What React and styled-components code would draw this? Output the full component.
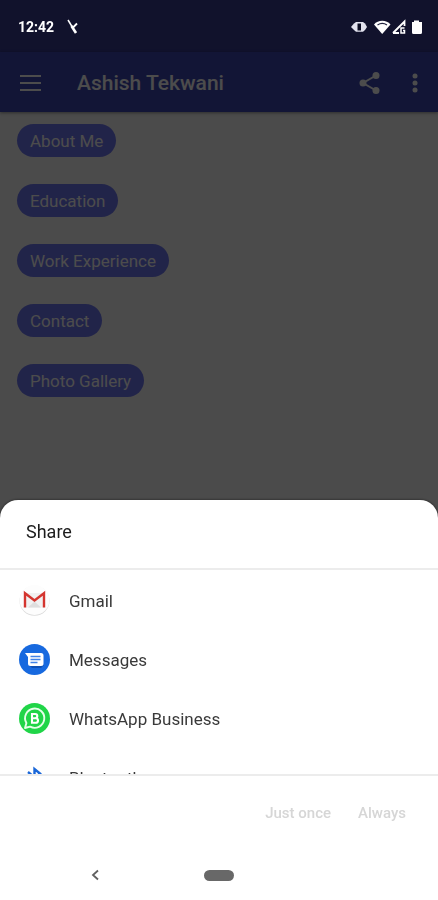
import styled, { createGlobalStyle } from "styled-components";

const GlobalStyle = createGlobalStyle`
    * {
        box-sizing: border-box;
    }

    body {
        margin: 0;
        font-family: Roboto, "Liberation Sans", sans-serif;
    }

    button {
        border: 0;
        padding: 0;
        background: none;
        font: inherit;
        color: inherit;
    }
`;

const Screen = styled.div`
    min-height: 100vh;
    background: #fafafa;
`;

const StatusBar = styled.div`
    height: 52px;
    background: #393c94;
`;

const StatusInfo = styled.div`
    display: flex;
    align-items: center;
    height: 52px;
    padding: 2px 15px 0 18px;
    color: #fff;
    font-size: 14px;
    font-weight: 700;
`;

const Notification = styled.svg`
    margin-left: 12px;
`;

const StatusIcons = styled.svg`
    margin-left: auto;
`;

const AppBar = styled.header`
    display: flex;
    align-items: center;
    height: 60px;
    padding: 2px 14px 0 20px;
    background: #3f49b4;
    color: #fff;
    box-shadow: 0 1px 3px rgba(0, 0, 0, 0.4);
`;

const Title = styled.h1`
    flex: 1;
    margin: 0 0 0 36px;
    font-size: 21px;
    font-weight: 500;
`;

const IconButton = styled.button`
    display: flex;
    margin-left: ${({ $gap }) => $gap || 0}px;
`;

const Chips = styled.nav`
    display: flex;
    flex-direction: column;
    align-items: flex-start;
    gap: 27px;
    padding: 12px 17px;
`;

const Chip = styled.button`
    height: 33px;
    padding: 0 13px;
    border-radius: 17px;
    background: #7078f4;
    color: #fff;
    font-size: 17px;
`;

const Overlay = styled.div`
    position: fixed;
    inset: 0;
    display: flex;
    flex-direction: column;
    justify-content: space-between;
    background: rgba(0, 0, 0, 0.7);
`;

const Sheet = styled.section`
    border-radius: 18px 18px 0 0;
    background: #fff;
    box-shadow: 0 0 3px rgba(0, 0, 0, 0.6);
`;

const SheetTitle = styled.h2`
    margin: 0;
    padding: 0 26px 4px;
    border-bottom: 2px solid #ececec;
    color: #1c1c1c;
    font-size: 18px;
    font-weight: 400;
    line-height: 64px;
`;

const AppList = styled.ul`
    height: 204px;
    margin: 0;
    padding: 1px 0 0;
    overflow: hidden;
    list-style: none;
`;

const AppRow = styled.button`
    display: flex;
    align-items: center;
    gap: 18px;
    width: 100%;
    height: 59px;
    padding: 0 18px;
    color: #3a3a3a;
    font-size: 17px;
    text-align: left;
`;

const Actions = styled.div`
    display: flex;
    justify-content: flex-end;
    align-items: center;
    gap: 27px;
    height: 76px;
    padding: 0 32px;
    border-top: 2px solid #ececec;
`;

const Action = styled.button`
    color: #d6d6d6;
    font-size: 15px;
    font-weight: 500;
`;

const SystemNav = styled.div`
    display: grid;
    grid-template-columns: 1fr 30px 1fr;
    align-items: center;
    height: 50px;
`;

const BackButton = styled.button`
    display: flex;
    justify-self: center;
    margin-right: 14px;
`;

const HomePill = styled.button`
    height: 11px;
    border-radius: 6px;
    background: #686868;
`;

const GmailIcon = () => (
    <svg width="33" height="33" viewBox="0 0 33 33" aria-hidden="true">
        <circle cx="16.5" cy="16.8" r="15" fill="#dcdcdc" />
        <circle cx="16.5" cy="16" r="15" fill="#fdfdfd" />
        <path d="M7 9h19v14.500H7z" fill="#f1f1f1" />
        <path d="M10 23.500l6.500-6 6.500 6z" fill="#dedede" />
        <path d="M7 23.500V9.200l9.500 7.300L26 9.200v14.300" fill="none" stroke="#d4352f" strokeWidth="2.400" />
    </svg>
);

const MessagesIcon = () => (
    <svg width="33" height="33" viewBox="0 0 33 33" aria-hidden="true">
        <circle cx="16.500" cy="16.500" r="15.500" fill="#1769df" />
        <path d="M11 22l3 3h9l3-3z" fill="#0d4fb5" />
        <path d="M7 10h16a2.500 2.500 0 0 1 2.500 2.500v8A2.500 2.500 0 0 1 23 23H12.500a2.500 2.500 0 0 1-2.500-2.500V14z" fill="#fff" />
        <path d="M12.500 13.500h10M12.500 16.500h10M12.500 19.500h7" stroke="#3f82e8" strokeWidth="1.300" />
    </svg>
);

const WhatsAppIcon = () => (
    <svg width="33" height="33" viewBox="0 0 33 33" aria-hidden="true">
        <circle cx="16.500" cy="16.500" r="15.500" fill="#20d548" />
        <path d="M7 26l1.400-5a9.600 9.600 0 1 1 3.700 3.600z" fill="none" stroke="#e4ffe8" strokeWidth="1.900" strokeLinejoin="round" />
        <path
            d="M14 12h3.200a2.100 2.100 0 0 1 0 4.200H14zm0 4.200h3.700a2.300 2.300 0 0 1 0 4.600H14z"
            fill="none"
            stroke="#fff"
            strokeWidth="2.100"
        />
    </svg>
);

const BluetoothIcon = () => (
    <svg width="33" height="33" viewBox="0 0 33 33" fill="none" stroke="#1a67d8" strokeWidth="2.400" aria-hidden="true">
        <path d="M10 11l12 10-5.500 5V8l5.500 4.500-12 10" />
    </svg>
);

const apps = [
    { name: "Gmail", Icon: GmailIcon },
    { name: "Messages", Icon: MessagesIcon },
    { name: "WhatsApp Business", Icon: WhatsAppIcon },
    { name: "Bluetooth", Icon: BluetoothIcon },
];

const sections = ["About Me", "Education", "Work Experience", "Contact", "Photo Gallery"];

export default function App() {
    return <>
        <GlobalStyle />
        <Screen>
            <StatusBar />
            <AppBar>
                <IconButton aria-label="Menu">
                    <svg width="21" height="16" viewBox="0 0 21 16" stroke="currentColor" strokeWidth="2">
                        <path d="M0 1h21M0 8h21M0 15h21" />
                    </svg>
                </IconButton>
                <Title>Ashish Tekwani</Title>
                <IconButton aria-label="Share">
                    <svg width="21" height="24" viewBox="0 0 21 24" fill="currentColor">
                        <path d="M17 4.500L4 12l13 7.500" fill="none" stroke="currentColor" strokeWidth="2" />
                        <circle cx="17" cy="4.500" r="3.500" />
                        <circle cx="4" cy="12" r="3.500" />
                        <circle cx="17" cy="19.500" r="3.500" />
                    </svg>
                </IconButton>
                <IconButton aria-label="More options" $gap={26}>
                    <svg width="18" height="20" viewBox="0 0 18 20" fill="currentColor">
                        <circle cx="9" cy="3" r="2.500" />
                        <circle cx="9" cy="10" r="2.500" />
                        <circle cx="9" cy="17" r="2.500" />
                    </svg>
                </IconButton>
            </AppBar>
            <Chips>
                {sections.map(name => <Chip key={name}>{name}</Chip>)}
            </Chips>
        </Screen>
        <Overlay>
            <StatusInfo>
                <span>12:42</span>
                <Notification width="14" height="16" viewBox="0 0 14 16" fill="none" stroke="#fff" aria-hidden="true">
                    <path d="M2 1l4 6.500" strokeWidth="1.500" />
                    <path d="M5.500 7L10 14" strokeWidth="2.600" />
                    <path d="M7 8.500l4-4" strokeWidth="1.800" />
                </Notification>
                <StatusIcons width="73" height="18" viewBox="0 0 73 18" fill="#fff" aria-hidden="true">
                    <path d="M1 9l3-3.500L6 4h7l2 1.500L17 9l-2 3-2 1.800H6L4 12z" fill="#e2e2ee" />
                    <path d="M7.500 5.500h3.500v7H7.500z" fill="#0b0c22" />
                    <path d="M24 6.500c4-5 12.500-5 16.500 0L32.200 16z" />
                    <path d="M27.500 7c3-2 6.500-2 9.500 0" fill="none" stroke="#22243f" strokeWidth="1.200" />
                    <path d="M43 15L54.500 3.500V8M43 15h6" fill="none" stroke="#fff" strokeWidth="1.800" />
                    <path d="M54.500 10H51v5h3.500v-2.500H53" fill="none" stroke="#fff" strokeWidth="1.500" />
                    <path d="M62 4h2V2.500h5V4h3v10.500a1.500 1.500 0 0 1-1.500 1.500h-7A1.500 1.500 0 0 1 62 14.500z" />
                </StatusIcons>
            </StatusInfo>
            <Sheet role="dialog" aria-labelledby="share-title">
                <SheetTitle id="share-title">Share</SheetTitle>
                <AppList>
                    {apps.map(({ name, Icon }) => (
                        <li key={name}>
                            <AppRow><Icon />{name}</AppRow>
                        </li>
                    ))}
                </AppList>
                <Actions>
                    <Action disabled>Just once</Action>
                    <Action disabled>Always</Action>
                </Actions>
                <SystemNav>
                    <BackButton aria-label="Back">
                        <svg width="8" height="12" viewBox="0 0 8 12" fill="none" stroke="#606060" strokeWidth="1.800">
                            <path d="M7 1.500L2 6l5 4.500" />
                        </svg>
                    </BackButton>
                    <HomePill aria-label="Home" />
                </SystemNav>
            </Sheet>
        </Overlay>
    </>
}
